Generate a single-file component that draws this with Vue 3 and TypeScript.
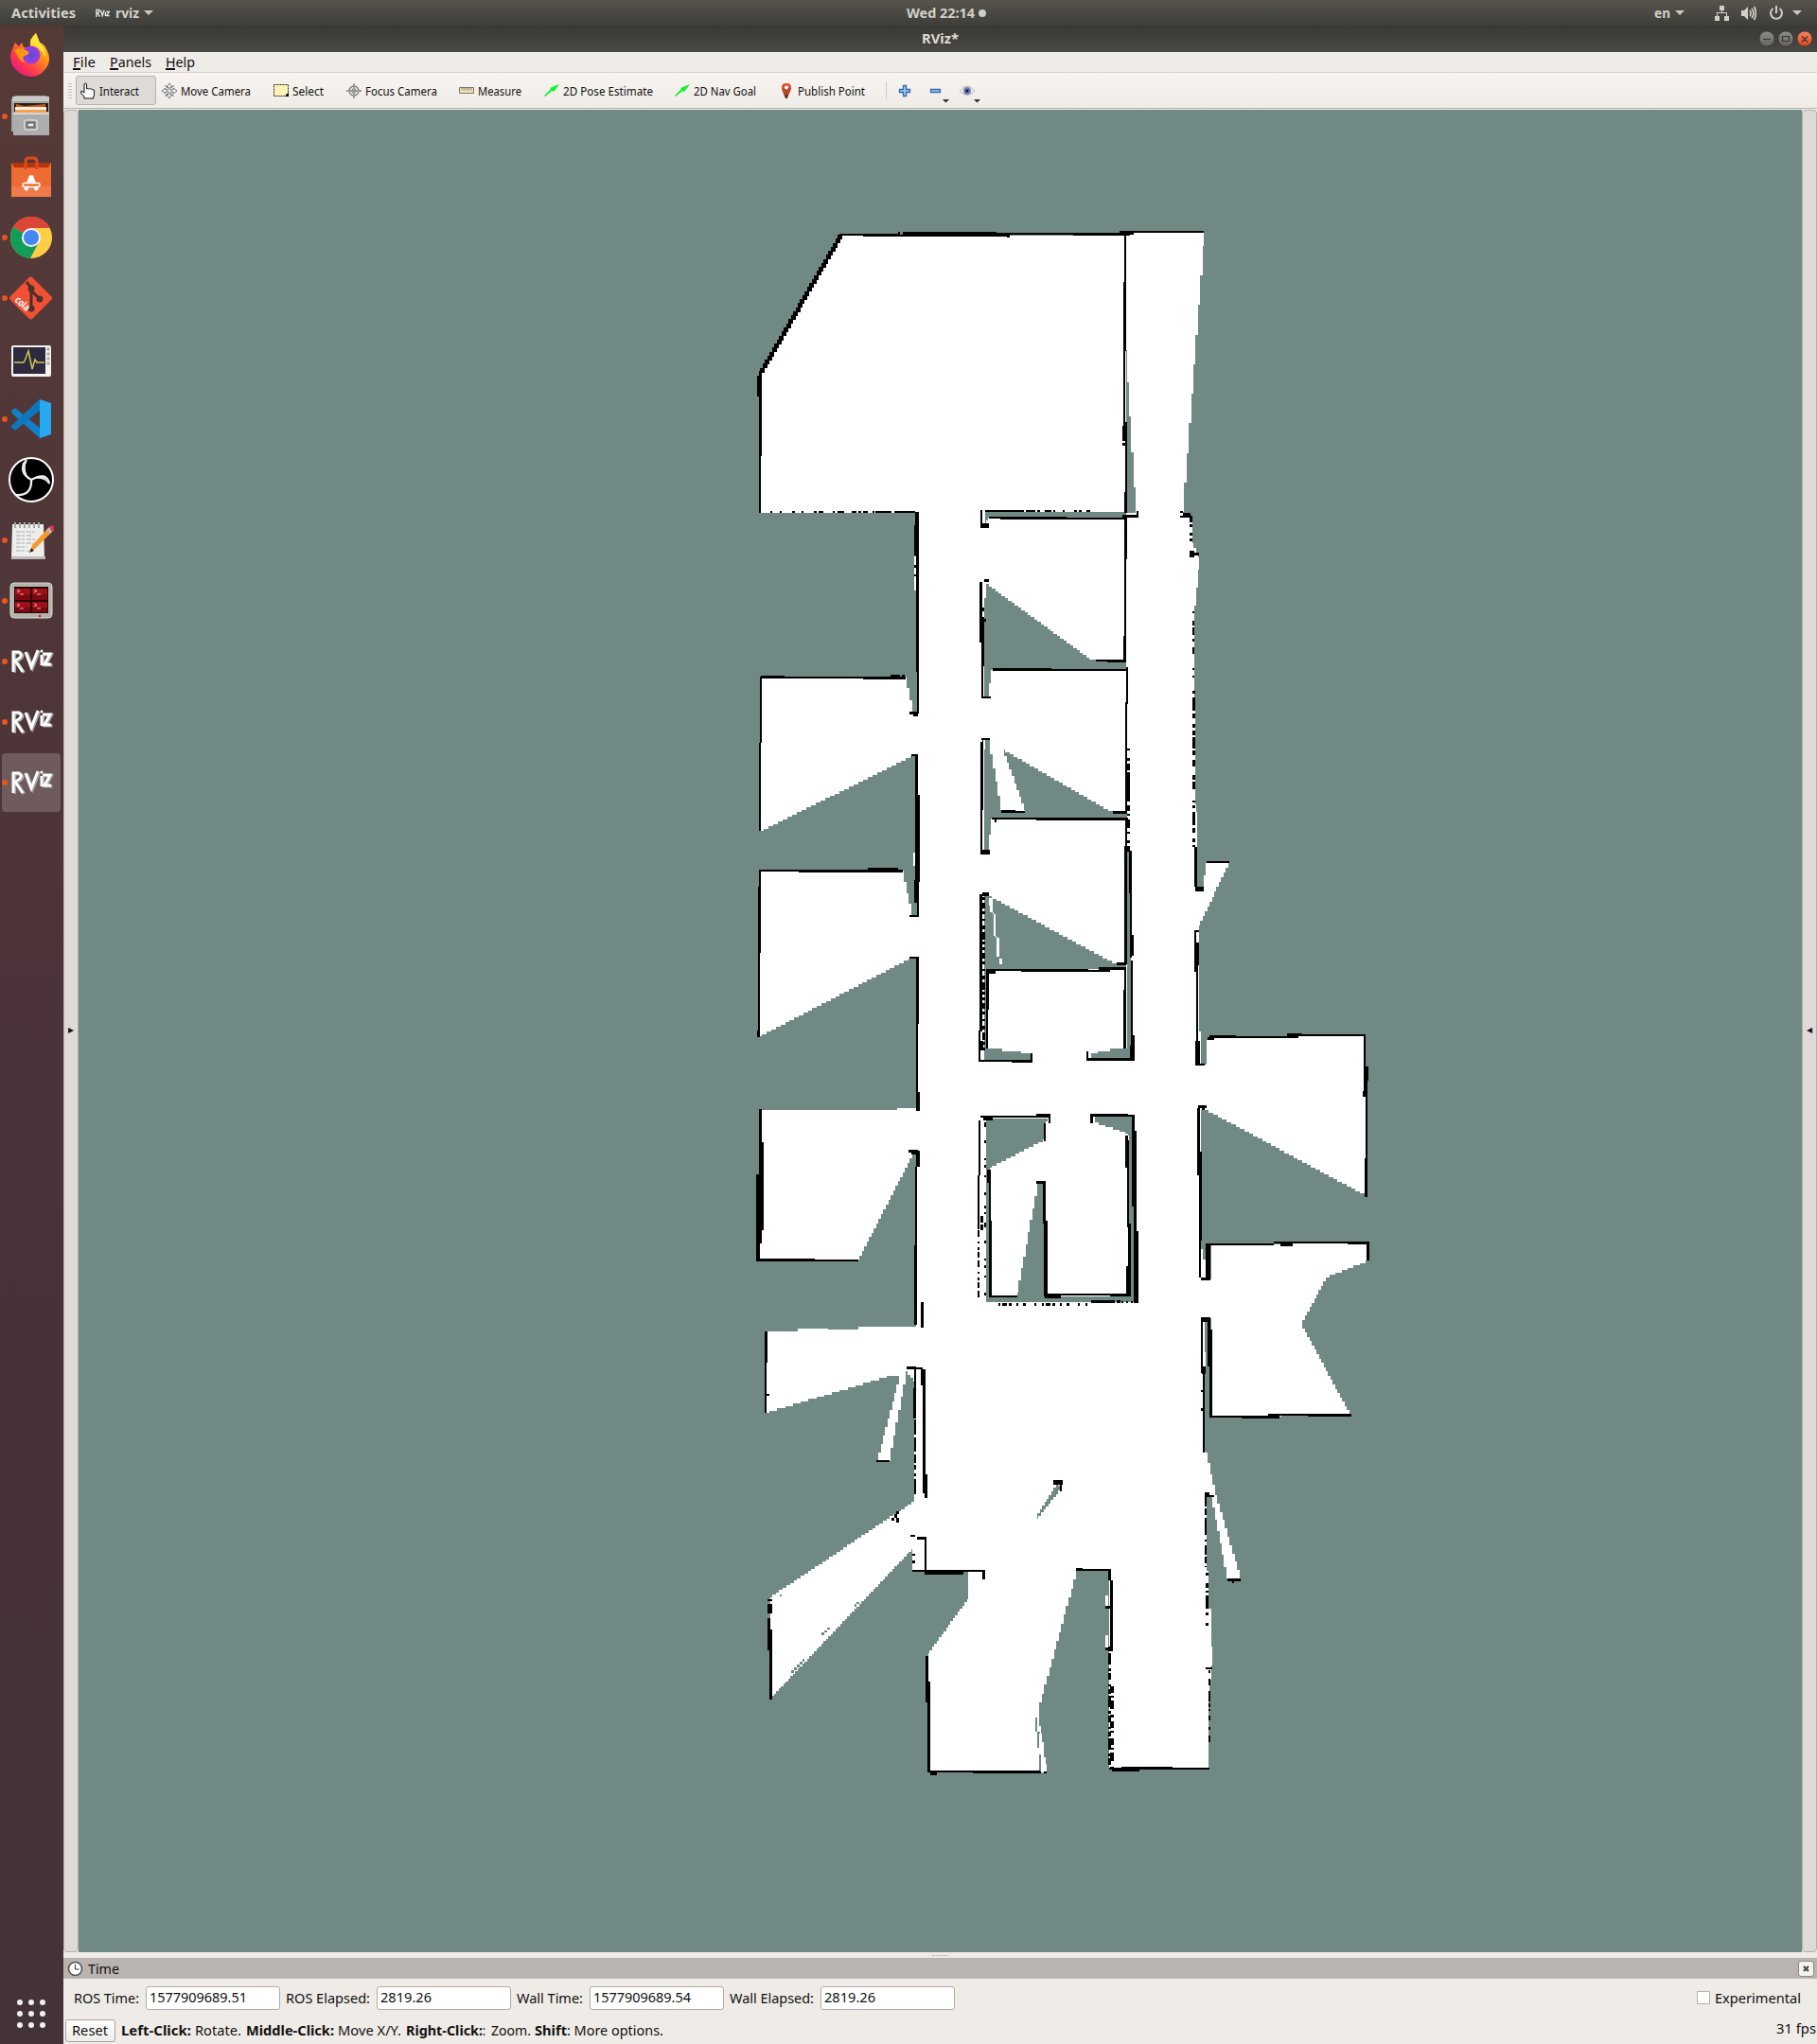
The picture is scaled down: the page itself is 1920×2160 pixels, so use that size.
<script setup lang="ts">
import { h } from 'vue'

interface LabelProps { t: string; w: number; s?: number; b?: boolean }

/* Single-line label fitted to a fixed advance width */
const Label = (p: LabelProps) =>
  h('svg', { width: p.w, height: 20, style: 'display:block;overflow:visible;flex:none' }, [
    h('text', {
      x: 0, y: 15, textLength: p.w, lengthAdjust: 'spacingAndGlyphs', fill: 'currentColor',
      'font-size': p.s ?? 14, 'font-weight': p.b ? 700 : 400, 'xml:space': 'preserve',
    }, p.t),
  ])
Label.props = ['t', 'w', 's', 'b']

type Pt = [number, number]
const CELL = 2.5

/* Polygon path whose slanted edges are broken into grid-cell steps */
function stairs(flat: number[]): string {
  const pts: Pt[] = []
  for (let i = 0; i < flat.length; i += 2) pts.push([flat[i], flat[i + 1]])
  let d = `M${pts[0][0]} ${pts[0][1]}`
  pts.forEach(([x0, y0], i) => {
    const [x1, y1] = pts[(i + 1) % pts.length]
    const n = Math.max(1, Math.round(Math.min(Math.abs(x1 - x0), Math.abs(y1 - y0)) / CELL))
    for (let k = 1; k <= n; k++) {
      const x = Math.round(x0 + ((x1 - x0) * (k - 0.5)) / n)
      const y = Math.round(y0 + ((y1 - y0) * k) / n)
      d += `H${x}V${y}`
    }
    d += `H${x1}`
  })
  return d + 'Z'
}

const free: number[][] = [
  [889, 249, 1190, 249, 1190, 246, 1272, 246, 1272, 260, 1250, 541, 1250, 545, 1259, 546, 1260, 574, 1267, 589, 1267, 602, 1263, 640, 1261, 690, 1263, 740, 1263, 850, 1265, 858, 1265, 938, 1271, 938, 1275, 912, 1299, 912, 1267, 978, 1267, 1090, 1270, 1140, 1268, 1170, 1270, 1320, 1275, 1350, 1279, 1352, 1279, 1392, 1272, 1395, 1273, 1534, 1275, 1535, 1285, 1580, 1311, 1668, 1297, 1668, 1280, 1581, 1275, 1581, 1275, 1660, 1281, 1740, 1281, 1760, 1277, 1790, 1277, 1869, 1173, 1869, 1170, 1658, 1138, 1660, 1097, 1808, 1106, 1873, 981, 1873, 981, 1747, 1023, 1690, 1023, 1660, 964, 1660, 964, 1637, 814, 1795, 814, 1688, 965, 1587, 966, 1460, 958, 1449, 940, 1544, 927, 1544, 951, 1454, 941, 1454, 809, 1493, 809, 1407, 843, 1407, 843, 1404, 907, 1405, 907, 1402, 968, 1402, 968, 1218, 965, 1219, 907, 1332, 803, 1332, 803, 1173, 948, 1173, 948, 1171, 970, 1171, 970, 1013, 962, 1013, 803, 1095, 803, 920, 954, 920, 964, 967, 970, 967, 970, 797, 965, 799, 804, 878, 804, 715, 957, 715, 965, 752, 970, 752, 970, 542, 803, 542, 803, 396],
  [1273, 1125, 1276, 1099, 1279, 1095, 1442, 1094, 1444, 1264, 1275, 1173, 1268, 1173, 1268, 1125],
  [1279, 1315, 1446, 1314, 1446, 1332, 1402, 1350, 1375, 1399, 1427, 1495, 1280, 1497],
  [1272, 1352, 1283, 1352, 1283, 1393, 1272, 1393],
]

const unknown: number[][] = [
  [1190, 370, 1192, 404, 1194, 440, 1199, 515, 1201, 542, 1190, 542],
  [1041, 541, 1190, 541, 1190, 547, 1045, 547, 1041, 553],
  [1043, 617, 1153, 697, 1190, 699, 1190, 708, 1048, 708, 1044, 736, 1040, 736, 1040, 632],
  [1040, 792, 1042, 782, 1045, 782, 1058, 856, 1058, 859, 1083, 859, 1083, 856, 1060, 792, 1173, 857, 1191, 859, 1191, 865, 1048, 865, 1044, 898, 1040, 898],
  [1040, 947, 1046, 947, 1177, 1018, 1190, 1018, 1190, 1024, 1043, 1024, 1043, 1108, 1052, 1108, 1066, 1111, 1091, 1113, 1091, 1120, 1039, 1120],
  [1191, 900, 1195, 900, 1195, 1118, 1153, 1118, 1153, 1113, 1180, 1108, 1191, 1108],
  [1042, 1182, 1108, 1182, 1104, 1187, 1104, 1204, 1046, 1234, 1046, 1371, 1075, 1371, 1075, 1366, 1097, 1251, 1103, 1251, 1103, 1370, 1192, 1370, 1193, 1200, 1187, 1196, 1157, 1186, 1157, 1180, 1198, 1180, 1198, 1376, 1041, 1376],
  [1117, 1568, 1122, 1572, 1096, 1605, 1095, 1603],
]

const slits: string[] = [
  'M1045 949h4v17h3v25h4v22h3v6h-3v-8h-3v-22h-3v-25h-4z',
  'M1271 1331h3v19h-3zM1269 1338h3v12h-3zM1271 1429h3v16h-3zM965 901h2v14h-2zM966 588h3v36h-3z',
  'M1168 1686h3v12h-3zM1168 1728h3v14h-3zM1098 1832h3v22h-3zM1101 1850h2v23h-2zM1103 1864h3v10h-3zM1036 550h4v-11h-3z',
]
const greySlits = 'M1094 1815h2v15h-2zM1096 1830h3v17h-3zM1098 1850h2v22h-2zM868 1725h3v-2h3v-3h3v2h-3v3h-3v3h-3zM833 1768h3v-3h3v-3h3v-3h3v-3h3v-3h2v3h-2v3h-3v3h-3v3h-3v3h-3zM903 1695h2v-2h3v2h-3v3h-2zM824 1685h2v2h-2z'

/* Straight walls: x, y, width, height */
const walls: number[][] = [
  [887, 247, 64, 2], [912, 248, 155, 2], [954, 245, 99, 3], [949, 245, 2, 2], [1053, 246, 131, 2], [1134, 247, 60, 2], [1064, 248, 3, 3],
  [1183, 244, 89, 2], [1183, 245, 15, 3], [1188, 247, 2, 124], [1187, 298, 2, 152], [1186, 450, 4, 16], [1186, 468, 3, 3], [1189, 446, 2, 96], [1188, 520, 2, 22],
  [802, 392, 3, 90], [800, 397, 4, 22], [802, 418, 2, 124],
  [945, 540, 22, 2], [967, 541, 4, 16], [925, 540, 17, 2], [966, 555, 3, 32], [968, 550, 3, 160], [966, 597, 3, 3], [966, 607, 3, 2], [969, 690, 2, 64], [961, 752, 9, 3], [965, 754, 5, 3],
  [1041, 539, 41, 2], [1036, 539, 2, 17], [1036, 553, 9, 5], [1045, 546, 82, 2], [1057, 547, 132, 2], [1186, 544, 16, 3], [1201, 540, 2, 7],
  [1188, 547, 3, 44], [1188, 591, 2, 107], [1187, 672, 2, 27], [1158, 697, 32, 2], [1170, 699, 20, 1],
  [1035, 615, 3, 64], [1038, 642, 2, 4], [1037, 652, 3, 52], [1037, 690, 2, 47], [1037, 736, 10, 2], [1040, 612, 5, 3], [1038, 654, 4, 3],
  [1049, 706, 62, 3], [1049, 707, 143, 2], [1190, 705, 2, 39], [1189, 742, 2, 116], [1191, 818, 3, 24], [1176, 857, 15, 3],
  [1037, 780, 9, 2], [1036, 784, 2, 115], [1038, 782, 1, 74], [1036, 898, 10, 5], [1058, 856, 15, 3], [1058, 857, 25, 2], [1048, 864, 144, 2], [1095, 865, 95, 2], [1051, 866, 2, 3],
  [1189, 864, 2, 30], [1188, 894, 3, 125], [1193, 899, 3, 45], [1194, 944, 2, 68], [1195, 988, 3, 22], [1195, 1015, 2, 105], [1180, 1017, 10, 3],
  [1035, 945, 3, 145], [1038, 943, 7, 4], [1042, 1024, 108, 2], [1044, 1026, 8, 3], [1079, 1025, 94, 2], [1161, 1022, 29, 3], [1042, 1024, 3, 43], [1042, 1067, 2, 41], [1188, 1024, 2, 84], [1187, 1046, 2, 62],
  [1034, 1089, 2, 33], [1036, 1100, 3, 10], [1034, 1120, 57, 2], [1069, 1121, 22, 2], [1089, 1113, 2, 8], [1148, 1111, 2, 10], [1148, 1118, 51, 3], [1194, 1105, 3, 16], [1196, 1094, 3, 27],
  [1036, 1179, 74, 2], [1039, 1181, 10, 3], [1095, 1177, 15, 4], [1108, 1179, 2, 8], [1103, 1187, 2, 19], [1152, 1177, 40, 3], [1152, 1177, 3, 10], [1152, 1178, 47, 2], [1196, 1178, 3, 97], [1198, 1195, 3, 182], [1201, 1301, 2, 76],
  [1189, 1200, 3, 34], [1191, 1205, 2, 92], [1192, 1293, 3, 77], [1190, 1338, 5, 30], [1095, 1248, 10, 3], [1102, 1248, 3, 45], [1103, 1290, 4, 80], [1103, 1367, 91, 2], [1104, 1368, 17, 4], [1173, 1368, 21, 2],
  [1043, 1236, 4, 14], [1045, 1236, 2, 135], [1045, 1290, 3, 81], [1045, 1369, 30, 2], [1153, 1374, 25, 3], [1180, 1374, 4, 3], [1034, 1184, 2, 58], [1033, 1242, 2, 57],
  [804, 714, 25, 2], [804, 715, 153, 2], [912, 716, 45, 2], [941, 713, 10, 2], [953, 713, 3, 2], [803, 715, 2, 70], [802, 785, 2, 70], [802, 855, 2, 23],
  [963, 797, 7, 2], [967, 797, 3, 55], [967, 840, 5, 92], [966, 930, 4, 24], [969, 930, 2, 39], [961, 967, 10, 2],
  [802, 919, 152, 2], [844, 920, 110, 2], [917, 917, 32, 3], [802, 919, 2, 20], [801, 937, 3, 70], [801, 1007, 2, 88], [800, 1089, 3, 7],
  [961, 1011, 10, 2], [968, 1011, 3, 71], [968, 1082, 2, 92], [968, 1154, 4, 20],
  [802, 1172, 3, 35], [802, 1207, 5, 93], [799, 1241, 4, 92], [801, 1300, 4, 14], [799, 1331, 108, 2], [799, 1330, 62, 2], [960, 1215, 10, 3], [963, 1216, 9, 4], [968, 1218, 4, 15], [967, 1233, 2, 167], [966, 1316, 3, 84], [973, 1376, 3, 27],
  [808, 1407, 3, 33], [808, 1440, 2, 53], [809, 1473, 4, 2], [958, 1444, 10, 3], [966, 1445, 9, 2], [966, 1447, 2, 20], [965, 1467, 3, 32], [973, 1447, 5, 17], [975, 1447, 3, 131], [977, 1558, 3, 25], [926, 1543, 14, 2],
  [947, 1597, 3, 3], [945, 1600, 3, 4], [942, 1604, 3, 3], [947, 1604, 3, 5], [962, 1622, 5, 2], [969, 1624, 10, 3], [977, 1624, 2, 37], [964, 1659, 77, 2], [977, 1660, 41, 4], [1038, 1660, 3, 9],
  [811, 1690, 5, 2], [811, 1695, 5, 10], [811, 1710, 3, 34], [813, 1722, 3, 72], [813, 1793, 3, 3],
  [978, 1750, 3, 49], [980, 1777, 3, 95], [980, 1871, 119, 2], [1028, 1872, 72, 2], [983, 1872, 7, 4], [1103, 1872, 3, 2],
  [1137, 1657, 7, 3], [1137, 1658, 37, 2], [1171, 1658, 3, 12], [1173, 1670, 3, 75], [1168, 1697, 5, 3], [1168, 1741, 3, 3], [1172, 1868, 106, 2], [1175, 1869, 29, 3], [1185, 1867, 54, 2],
  [1113, 1564, 10, 5], [1120, 1564, 2, 12],
  [1247, 540, 3, 2], [1250, 542, 8, 3], [1247, 545, 13, 2], [1257, 545, 3, 5], [1257, 582, 5, 7], [1262, 584, 5, 3], [1262, 895, 3, 42], [1263, 937, 9, 5], [1275, 910, 24, 2],
  [1262, 983, 5, 2], [1262, 985, 2, 42], [1263, 996, 4, 24], [1264, 1020, 2, 80], [1263, 1100, 5, 24], [1263, 1124, 10, 2],
  [1276, 1096, 7, 3], [1278, 1094, 28, 2], [1279, 1095, 93, 2], [1360, 1092, 16, 3], [1375, 1093, 68, 2], [1441, 1093, 2, 61], [1443, 1127, 3, 15], [1440, 1153, 4, 6], [1443, 1142, 2, 122], [1442, 1224, 3, 41],
  [1266, 1168, 9, 3], [1270, 1170, 3, 3], [1265, 1171, 3, 71], [1267, 1217, 3, 94], [1267, 1310, 2, 40], [1269, 1350, 10, 3], [1274, 1314, 5, 37], [1274, 1314, 72, 2], [1346, 1312, 100, 2], [1353, 1314, 13, 3], [1424, 1313, 23, 2], [1444, 1312, 3, 20],
  [1269, 1392, 10, 5], [1269, 1392, 2, 59], [1276, 1392, 3, 52], [1278, 1405, 3, 91], [1278, 1496, 74, 2], [1312, 1497, 40, 2], [1340, 1494, 88, 2], [1382, 1495, 46, 2], [1270, 1444, 4, 8], [1271, 1451, 2, 84], [1269, 1469, 2, 2], [1269, 1488, 2, 3],
  [1273, 1577, 5, 5], [1278, 1580, 5, 2], [1297, 1668, 14, 3], [1302, 1671, 2, 2], [1274, 1762, 7, 2],
]

/* Broken walls: x1, y1, x2, y2, thickness, dash pattern */
interface Dash { p: [number, number, number, number]; w: number; d: string }
const broken: Dash[] = [
  { p: [814, 541, 925, 541], w: 2, d: '2 8 2 11 3 7 2 11 3 2 5 10 2 3 7 8 5 2 3 2 5 5 2 3' },
  { p: [1084, 540, 1166, 540], w: 2, d: '10 2 3 5 7 2 2 8 2 10 3 2 3 5 4 14 2 0' },
  { p: [1258.5, 549, 1258.5, 574], w: 3, d: '3 2 3 6 3 3 3 4' },
  { p: [1260.5, 646, 1260.5, 716], w: 2, d: '2 8 5 2 8 4 3 6 7 15 2 6' },
  { p: [1261.5, 730, 1261.5, 895], w: 3, d: '3 4 14 3 5 6 4 3 5 2 12 2 5 5 7 9 5 2 8 12 2 3' },
  { p: [1192.5, 791, 1192.5, 862], w: 3, d: '2 8 3 3 7 2 3 3 25 4 6 3' },
  { p: [1192.5, 866, 1192.5, 900], w: 3, d: '9 4 2 7 3 3' },
  { p: [1039, 948, 1039, 1110], w: 3, d: '3 3 6 3 3 5 2 5 4 3 8 2 3 3' },
  { p: [1040.5, 1186, 1040.5, 1370], w: 2, d: '5 14 3 16 2 5 3 8 2 16 3 11 3 4 2 9' },
  { p: [1034, 1300, 1034, 1376], w: 2, d: '7 5 2 4 3 2 6 3' },
  { p: [1037, 1285, 1037, 1300], w: 3, d: '7 2' },
  { p: [1055, 1378, 1150, 1378], w: 3, d: '2 2 5 2 3 5 2 5 3 9 2 6' },
  { p: [1185, 1375.5, 1200, 1375.5], w: 2, d: '2 3' },
  { p: [966.5, 1500, 966.5, 1580], w: 2, d: '16 3 15 3 9 2 5 4 3 3' },
  { p: [965.5, 1642, 965.5, 1656], w: 3, d: '2 5 3 9' },
  { p: [1172, 1740, 1172, 1868], w: 3, d: '5 2 12 4 3 2 7 5 2 3' },
  { p: [1175, 1782, 1175, 1868], w: 4, d: '7 3 2 3 9 6 3 4 7 3 2 6' },
  { p: [1274, 1582, 1274, 1656], w: 2, d: '10 2 7 3 18 5 2 4' },
  { p: [1275.5, 1662, 1275.5, 1718], w: 3, d: '3 8 5 3 2 3 14 4' },
  { p: [1277.5, 1765, 1277.5, 1845], w: 2, d: '3 6 7 6 11 2 4 2 2 5 5 7' },
]

/* Slanted outer wall of the top hall, drawn as a run of offset cells */
const slant = Array.from({ length: 34 }, (_, i) => [Math.round(885 - i * 2.47), Math.round(248 + i * 4.26), 5, 5])

const tools = [
  { icon: 'hand', t: 'Interact', w: 42, box: 86 },
  { icon: 'move', t: 'Move Camera', w: 74, box: 118 },
  { icon: 'select', t: 'Select', w: 33, box: 77 },
  { icon: 'focus', t: 'Focus Camera', w: 76, box: 119 },
  { icon: 'ruler', t: 'Measure', w: 46, box: 90 },
  { icon: 'arrow', t: '2D Pose Estimate', w: 95, box: 138 },
  { icon: 'arrow', t: '2D Nav Goal', w: 66, box: 110 },
  { icon: 'pin', t: 'Publish Point', w: 71, box: 118 },
]
const apps = [
  ['firefox', 0], ['files', 1], ['software', 0], ['chrome', 1], ['cola', 1], ['monitor', 0], ['code', 1],
  ['obs', 0], ['notes', 1], ['term', 1], ['rviz', 1], ['rviz', 1], ['rviz', 1],
].map(([name, run]) => ({ name, run }))

const fields = [
  { t: 'ROS Time:', w: 69, v: '1577909689.51', vw: 103 },
  { t: 'ROS Elapsed:', w: 89, v: '2819.26', vw: 54 },
  { t: 'Wall Time:', w: 70, v: '1577909689.54', vw: 103 },
  { t: 'Wall Elapsed:', w: 89, v: '2819.26', vw: 54 },
]
const hints = [
  { t: 'Left-Click:', w: 74, b: true, g: 4 }, { t: 'Rotate.', w: 49, b: false, g: 5 },
  { t: 'Middle-Click:', w: 93, b: true, g: 4 }, { t: 'Move X/Y.', w: 67, b: false, g: 5 },
  { t: 'Right-Click:', w: 81, b: true, g: 0 }, { t: ':', w: 3, b: false, g: 6 },
  { t: 'Zoom.', w: 42, b: false, g: 4 }, { t: 'Shift', w: 34, b: true, g: 0 },
  { t: ': More options.', w: 102, b: false, g: 0 },
]
</script>

<template>
  <div class="desktop">
    <header class="topbar">
      <div class="tl">
        <Label t="Activities" :w="68" :s="14" :b="true" />
        <svg class="mini" width="15" height="10" viewBox="0 0 46 28"><g fill="none" stroke="#eee" stroke-width="4"><path d="M3 26V3h8q5 5-5 11l8 11M17 4l5 18 6-18M32 10v13M35 9h9l-8 13h9" /></g></svg>
        <Label t="rviz" :w="25" :s="14" :b="true" />
        <i class="caret" />
      </div>
      <div class="tc"><Label t="Wed 22:14" :w="72" :s="14" :b="true" /><i class="bullet" /></div>
      <div class="tr">
        <Label t="en" :w="17" :s="14" :b="true" />
        <i class="caret" />
        <svg class="net" width="16" height="16" viewBox="0 0 16 16"><path d="M5 0h5v5H8v2h5v4h2v5h-5v-5h2V8H3v3h2v5H0v-5h2V7h5V5H5z" fill="#d2cfc8" /></svg>
        <svg class="vol" width="16" height="16" viewBox="0 0 16 16"><path d="M0 5h3l4-4v14l-4-4H0z" fill="#d2cfc8" /><path d="M9 5q2 3 0 6M11 3q4 5 0 10M13.500 1q4 7 0 14" fill="none" stroke="#d2cfc8" stroke-width="1.700" /></svg>
        <svg class="pow" width="16" height="16" viewBox="0 0 16 16"><path d="M4.500 3a6 6 0 1 0 7 0M8 0v8" fill="none" stroke="#d2cfc8" stroke-width="2" /></svg>
        <i class="caret" />
      </div>
    </header>

    <div class="body">
      <nav class="dock">
        <div v-for="(a, i) in apps" :key="i" class="slot" :class="{ on: i === 12 }">
          <i v-if="a.run" class="dot" />
          <svg width="48" height="48" viewBox="0 0 48 48">
            <g v-if="a.name === 'firefox'">
              <defs>
                <linearGradient id="fx" x1="1" y1="0" x2=".2" y2="1"><stop offset="0" stop-color="#fff44f" /><stop offset=".4" stop-color="#ff980e" /><stop offset=".75" stop-color="#ff3750" /><stop offset="1" stop-color="#e3158a" /></linearGradient>
                <radialGradient id="fg"><stop offset="0" stop-color="#5a4ed8" /><stop offset="1" stop-color="#a338e0" /></radialGradient>
              </defs>
              <path d="M4 17l3-7 4 4 3-4 2 5 7 1V7l6-7 4 10q5 1 8 9 5 10-2 19-6 8-15 8T7 38Q-1 29 4 17z" fill="url(#fx)" />
              <circle cx="24" cy="23" r="9.500" fill="url(#fg)" />
              <path d="M6 18q6-3 10-1l6 3q-2 4-6 4-2 4 2 7-7-1-9-8z" fill="#ff980e" />
              <path d="M29 0l4 10q7 8 6 16-6-13-16-13 0-8 6-13z" fill="#ffe23a" />
            </g>
            <g v-else-if="a.name === 'files'">
              <path d="M6 4q0-2 2-2h32l3 3v35H3V6z" fill="#a4a4a3" /><path d="M4 3h39v5H4z" fill="#c9c9c8" /><path d="M6 10h36v9H6z" fill="#211d1b" /><path d="M8 11l9 2 22-2v9H8z" fill="#cf571c" /><path d="M7 14h33v3H7z" fill="#fff1de" /><path d="M7 17h33v3H7z" fill="#f3a151" /><path d="M5 20h38v24H5z" fill="#acadad" /><path d="M5 20h38v2H5z" fill="#d6d6d6" /><rect x="17" y="28" width="13" height="10" rx="2" fill="#858686" stroke="#ddd" stroke-width="1.500" /><path d="M20 31h7v4h-7z" fill="#eee" stroke="#555" />
            </g>
            <g v-else-if="a.name === 'software'">
              <path d="M3 9h42v6H3z" fill="#b6350c" /><path d="M3 9l3 5h36l3-5v36H3z" fill="#ee6b33" /><path d="M3 34h42v11H3z" fill="#f07a49" /><path d="M18 16V8q0-4 3-4h6q3 0 3 4v8" fill="none" stroke="#d84c20" stroke-width="3" /><path d="M18 38l6-15 6 15" fill="none" stroke="#fff" stroke-width="4" stroke-linejoin="bevel" /><rect x="15" y="30.500" width="18" height="4" rx="2" fill="#ee6b33" stroke="#fff" stroke-width="1.500" />
            </g>
            <g v-else-if="a.name === 'chrome'">
              <circle cx="24" cy="24" r="22" fill="#ffce44" /><path d="M24 24L5 13a22 22 0 0 1 39 1H24z" fill="#dc4639" /><path d="M24 24L5 13a22 22 0 0 0 18 33l9-17z" fill="#129c59" /><circle cx="24" cy="24" r="10" fill="#f4f4f4" /><circle cx="24" cy="24" r="8" fill="#4587f4" />
            </g>
            <g v-else-if="a.name === 'cola'">
              <path d="M21.500 2.500q2-2 4 0l20 20q1 1 0 3l-20 20q-2 2-4 0l-20-20q-1-1 0-3z" fill="#f05133" /><path d="M19 7l5 6v22M24 16l9 9" stroke="#4b312e" stroke-width="3" fill="none" /><circle cx="24" cy="14" r="3.500" fill="#4b312e" /><circle cx="33" cy="25" r="3.500" fill="#4b312e" /><circle cx="24" cy="35" r="3.500" fill="#4b312e" /><text x="6" y="27" font-size="11" font-weight="700" fill="#fff" transform="rotate(42 6 27)" textLength="17" lengthAdjust="spacingAndGlyphs">cola</text>
            </g>
            <g v-else-if="a.name === 'monitor'">
              <g transform="translate(0 5)"><rect x="3" y="5" width="42" height="33" rx="2" fill="#f4f2ee" /><rect x="5" y="7" width="34" height="28" fill="#2e2a3d" /><path d="M6 23h10l2-4 3-8 4 19 3-10 2 3h8" fill="none" stroke="#cfc653" stroke-width="1.500" /><g fill="#aaa"><circle cx="42" cy="9" r="1.700" /><circle cx="42" cy="14" r="1.700" /><circle cx="42" cy="19" r="1.700" /><circle cx="42" cy="24" r="1.700" /></g></g>
            </g>
            <g v-else-if="a.name === 'code'">
              <path d="M3 15l4-3 27 22v11L4 18z" fill="#1180c8" /><path d="M3 31l31-29v12L7 36l-4-3z" fill="#0e76bd" /><path d="M33 3l12 4v33l-12 4z" fill="#27a9f0" />
            </g>
            <g v-else-if="a.name === 'obs'">
              <circle cx="24" cy="24" r="23" fill="#000" stroke="#fff" stroke-width="2" /><path d="M19 3q-9 13 5 21 16-9 19 4M24 24q1 17-16 16" fill="none" stroke="#f3f3f3" stroke-width="2.300" /><path d="M15 6q-4 14 9 18-9-7-5-20zM44 30Q36 14 24 24q13-4 20 6zM8 40q18 2 16-16 0 15-16 16z" fill="#eee" />
            </g>
            <g v-else-if="a.name === 'notes'">
              <path d="M4 7h33l1 36H3z" fill="#eeeeec" /><path d="M3 41h36v3H3z" fill="#bbb" /><path d="M7 5v6M12 5v6M17 5v6M22 5v6M27 5v6M32 5v6" stroke="#aaa" stroke-width="2" /><path d="M8 15h22M8 19h16M8 23h20M8 27h18M8 31h12M8 35h14" stroke="#aaa" stroke-dasharray="5 1 3 2" /><path d="M23 36l2-7L41 12l4 4-17 17z" fill="#f49b30" /><path d="M40 13l4-4 4 4-4 4z" fill="#bbb" /><path d="M43 10q3-4 6 1l-3 4z" fill="#df3542" /><path d="M22 37l2-5 3 3z" fill="#222" />
            </g>
            <g v-else-if="a.name === 'term'">
              <rect x="2" y="5" width="44" height="37" rx="4" fill="#b2b4ac" stroke="#d7d8d3" /><rect x="6" y="9" width="36" height="28" fill="#270707" /><path d="M7 11h16v12H7zM25 11h16v12H25zM7 25h16v11H7zM25 25h16v11H25z" fill="#a30f18" /><path d="M7 17h16v6H7zM25 17h16v6H25zM7 31h16v5H7zM25 31h16v5H25z" fill="#7a0a12" /><path d="M9 12l3 1.500-3 1.500M12 17h4M27 12l3 1.500-3 1.500M30 17h4M9 27l3 1.500-3 1.500M12 32h4M27 27l3 1.500-3 1.500M30 32h4" fill="none" stroke="#ffb5b5" stroke-width=".9" /><circle cx="33" cy="40" r="1.300" fill="#e11" />
            </g>
            <g v-else>
              <g fill="none" stroke="#a8a5a4" stroke-width="3.200" transform="translate(1.500 .8)"><path d="M5 35V14h6q6 4-4 9l8 12M18 14l6 16 7-18M35 17v11M36 16h8l-6 11h7" /></g>
              <g fill="none" stroke="#fff" stroke-width="3"><path d="M5 35V14h6q6 4-4 9l8 12M18 14l6 16 7-18M35 17v11M36 16h8l-6 11h7" /></g><circle cx="35" cy="13" r="1.500" fill="#fff" />
            </g>
          </svg>
        </div>
        <svg class="grid" width="32" height="32" viewBox="0 0 32 32"><g fill="#f2f0f0"><template v-for="r in 3" :key="r"><circle v-for="c in 3" :key="c" :cx="c * 12 - 8" :cy="r * 12 - 8" r="3" /></template></g></svg>
      </nav>

      <main class="win">
        <div class="title">
          <div class="tt"><Label t="RViz*" :w="39" :s="14" :b="true" /></div>
          <svg class="wb" width="60" height="18" viewBox="0 0 60 18">
            <defs>
              <linearGradient id="gb" x2="0" y2="1"><stop offset="0" stop-color="#8e8c85" /><stop offset="1" stop-color="#65635e" /></linearGradient>
              <linearGradient id="rb" x2="0" y2="1"><stop offset="0" stop-color="#f58566" /><stop offset="1" stop-color="#dc4617" /></linearGradient>
            </defs>
            <circle cx="10" cy="9" r="8" fill="url(#gb)" stroke="#34332f" stroke-width=".7" /><circle cx="30" cy="9" r="8" fill="url(#gb)" stroke="#34332f" stroke-width=".7" /><circle cx="50" cy="9" r="8" fill="url(#rb)" stroke="#34332f" stroke-width=".7" />
            <path d="M6 9.500h8M26.500 6.500h7v5h-7zM47 6.500l6 6m0-6l-6 6" fill="none" stroke="#3b3630" stroke-width="1.200" />
          </svg>
        </div>
        <div class="menu">
          <span class="m" style="width: 39px"><Label t="File" :w="24" :s="15" /><u style="width: 8px" /></span>
          <span class="m" style="width: 59px"><Label t="Panels" :w="44" :s="15" /><u style="width: 9px" /></span>
          <span class="m"><Label t="Help" :w="31" :s="15" /><u style="width: 10px" /></span>
        </div>
        <div class="tools">
          <i class="grip" />
          <div v-for="(t, i) in tools" :key="i" class="tool" :style="{ width: t.box + 'px' }">
            <div class="tb" :class="{ sel: i === 0 }">
              <svg width="16" height="18" viewBox="0 0 16 18">
                <path v-if="t.icon === 'hand'" d="M4 11V3q0-2 1.300-2T6.600 3v4q1.200-1 2 0 1.200-1 2 0 1.200-1 2 1 2-1 2 1v4l-1 3v1H4v-2L1 12q-1-2 0-3l3 2" fill="#fff" stroke="#111" />
                <g v-else-if="t.icon === 'move'" fill="#f4f4f2" stroke="#666" stroke-width=".9"><path d="M8 1l3 4H9v3h3V6l4 3-4 3v-2H9v3h2l-3 4-3-4h2v-3H4v2L0 9l4-3v2h3V5H5zM3 3l3 3M13 3l-3 3M3 15l3-3M13 15l-3-3" /></g>
                <g v-else-if="t.icon === 'select'"><path d="M.5 2.500h15v12H.500z" fill="#fff4b4" stroke="#222" stroke-dasharray="2 1" /><path d="M16 11v4h-3v-2z" /></g>
                <g v-else-if="t.icon === 'focus'" fill="none" stroke="#777"><circle cx="8" cy="9" r="5" stroke-width="1.300" /><circle cx="8" cy="9" r="2.300" /><path d="M8 1v16M0 9h16" stroke="#999" stroke-width="1.800" /></g>
                <g v-else-if="t.icon === 'ruler'"><path d="M.5 5.500h15v6H.500z" fill="#efe3b2" stroke="#777" /><path d="M3 6v2M5 6v3M7 6v2M9 6v3M11 6v2M13 6v3" stroke="#777" stroke-width=".8" /></g>
                <path v-else-if="t.icon === 'arrow'" d="M0 14l7-7-1-1L16 2l-6 8-2-1-7 6z" fill="#0df32c" />
                <g v-else><path d="M8 1q5 0 5 5 0 2-4 10v1H7Q3 8 3 6q0-5 5-5z" fill="#b64427" /><path d="M6 13h4l-1 4H7z" fill="#4f3b22" /><path d="M3 6q0-5 5-5t5 5" fill="#e15432" /><circle cx="8" cy="5.500" r="2" fill="#fff" /></g>
              </svg>
              <Label :t="t.t" :w="t.w" :s="12.5" />
            </div>
          </div>
          <i class="sep" />
          <svg width="110" height="36" viewBox="-1 0 110 36">
            <path d="M16.500 12.500h3v4h4v3h-4v4h-3v-4h-4v-3h4z" fill="#a9c9ee" stroke="#3067ae" stroke-width="1.300" />
            <path d="M45.500 16.500h10v3h-10z" fill="#a9c9ee" stroke="#3067ae" stroke-width="1.300" />
            <path d="M76 18q8-10 16 0-8 9-16 0z" fill="#eee" stroke="#bbb" /><circle cx="84" cy="18" r="4" fill="#7583bb" /><circle cx="84" cy="18" r="1.700" fill="#151b46" />
            <path d="M58 27h7l-3.500 3.500zM91 27h7l-3.500 3.500z" fill="#333" />
          </svg>
        </div>

        <div class="stage">
          <div class="side l"><b>▸</b></div>
          <svg class="map" viewBox="83 116 1821 1947" width="1821" height="1947" shape-rendering="crispEdges">
            <path v-for="(p, i) in free" :key="'f' + i" :d="stairs(p)" fill="#fff" />
            <path v-for="(p, i) in unknown" :key="'u' + i" :d="stairs(p)" fill="#708984" />
            <path :d="greySlits" fill="#708984" />
            <path v-for="(p, i) in slits" :key="'s' + i" :d="p" fill="#fff" />
            <rect v-for="(r, i) in walls" :key="'w' + i" :x="r[0]" :y="r[1]" :width="r[2]" :height="r[3]" />
            <rect v-for="(r, i) in slant" :key="'d' + i" :x="r[0]" :y="r[1]" :width="r[2]" :height="r[3]" />
            <line v-for="(b, i) in broken" :key="'b' + i" :x1="b.p[0]" :y1="b.p[1]" :x2="b.p[2]" :y2="b.p[3]" stroke="#000" :stroke-width="b.w" :stroke-dasharray="b.d" />
          </svg>
          <div class="side r"><b>◂</b></div>
        </div>

        <div class="split"><i /></div>
        <div class="panel">
          <svg width="17" height="17" viewBox="0 0 17 17"><circle cx="8.500" cy="8.500" r="7" fill="#fff" stroke="#55534f" stroke-width="1.600" /><path d="M8.500 4v5h4" fill="none" stroke="#333" /></svg>
          <Label t="Time" :w="33" :s="15" />
          <span class="x"><svg width="7" height="7" viewBox="0 0 7 7"><path d="M1 1l5 5m0-5L1 6" stroke="#444" stroke-width="2" /></svg></span>
        </div>
        <div class="row">
          <template v-for="(f, i) in fields" :key="i">
            <Label :t="f.t" :w="f.w" :s="14.5" />
            <span class="inp"><Label :t="f.v" :w="f.vw" :s="14.5" /></span>
          </template>
          <span class="cb" />
          <Label t="Experimental" :w="91" :s="14.5" />
        </div>
        <footer class="foot">
          <span class="reset"><Label t="Reset" :w="38" :s="14.5" /></span>
          <span v-for="(x, i) in hints" :key="i" :style="{ marginRight: x.g + 'px' }"><Label :t="x.t" :w="x.w" :b="x.b" :s="14.5" /></span>
          <span class="fps"><Label t="31 fps" :w="42" :s="14.5" /></span>
        </footer>
      </main>
    </div>
  </div>
</template>

<style>
body { margin: 0; background: #efebe7; }
</style>

<style scoped>
.desktop { width: 1920px; height: 2160px; display: flex; flex-direction: column; overflow: hidden; font-family: "Noto Sans", "Open Sans", sans-serif; color: #111; }
.topbar { height: 27px; flex: none; display: grid; grid-template-columns: 958px 1fr 172px; align-items: center; background: linear-gradient(#57544c, #3e3d38); color: #d3d0c8; }
.tl, .tc, .tr { display: flex; align-items: center; height: 27px; }
.tl { padding-left: 12px; }
.mini { margin: 0 6px 0 21px; }
.caret { width: 0; border: 5px solid transparent; border-top-color: #cbc8c0; border-bottom: 0; margin-left: 5px; }
.bullet { width: 8px; height: 8px; border-radius: 50%; background: #ccc; margin-left: 4px; }
.net { margin-left: 32px; }
.vol { margin-left: 12px; }
.pow { margin-left: 13px; }
.tr .caret:last-child { margin-left: 9px; }
.body { flex: 1; display: flex; min-height: 0; }
.dock { width: 67px; flex: none; display: flex; flex-direction: column; background: linear-gradient(#553a37, #49323a 60%, #44323a); }
.slot { height: 64px; width: 66px; display: flex; align-items: center; justify-content: center; position: relative; flex: none; }
.slot.on::before { content: ''; position: absolute; left: 2px; top: 1px; width: 62px; height: 62px; border-radius: 4px; background: #6f5a5d; }
.slot svg { position: relative; }
.dot { position: absolute; left: 2px; top: 29px; width: 6px; height: 6px; border-radius: 50%; background: #e95420; z-index: 1; }
.grid { margin: auto 0 16px 17px; }
.win { width: 1853px; display: flex; flex-direction: column; background: #efebe7; }
.title { height: 28px; flex: none; display: flex; align-items: center; background: linear-gradient(#393834, #4b4944); color: #dfdbd2; }
.tt { margin-left: 907px; }
.wb { margin-left: auto; margin-right: 3px; }
.menu { height: 21px; flex: none; display: flex; padding-left: 10px; border-bottom: 1px solid #d5d0cb; }
.m { position: relative; }
.m svg { transform: translateY(1px); }
.m u { position: absolute; left: 0; top: 17px; height: 2px; background: #111; }
.tools { height: 37px; flex: none; display: flex; align-items: center; background: linear-gradient(#f8f5f0, #efebe7); border-bottom: 1px solid #b8b3ad; margin-bottom: 1px; }
.grip { width: 4px; height: 17px; margin: 0 4px 0 5px; background: radial-gradient(#c4bfba 0.7px, transparent 0.8px) 0 0 / 2px 3px; }
.tool { flex: none; }
.tb { height: 29px; display: flex; align-items: center; padding-left: 4px; border: 1px solid transparent; }
.tb svg + svg { margin-left: 4px; }
.tb.sel { width: 79px; background: #dddad7; border-color: #b5b0ab; border-radius: 3px; }
.sep { width: 1px; height: 19px; background: #cfcac5; }
.stage { display: flex; height: 1947px; flex: none; }
.side { width: 13px; border: 1px solid #b4afaa; background: #dedad7; border-radius: 4px; display: flex; align-items: center; justify-content: center; font: 14px "DejaVu Sans", sans-serif; }
.side b { font-weight: 400; font-size: 12px; margin-bottom: 3px; }
.side.l { width: 14px; }
.side.r { width: 14px; }
.map { display: block; flex: none; background: #708984; }
.split { height: 6px; display: flex; justify-content: center; align-items: center; flex: none; }
.split i { width: 17px; height: 0; border-top: 1px dotted #aaa; }
.panel { height: 22px; flex: none; display: flex; align-items: center; background: #b9b4b0; padding: 0 3px 0 4px; }
.panel svg + svg { margin-left: 5px; transform: translateY(1px); }
.x { margin-left: auto; width: 15px; height: 15px; border: 1px solid #8d8883; border-radius: 3px; background: #f4f2ef; display: flex; align-items: center; justify-content: center; }
.row { height: 40px; flex: none; display: flex; align-items: center; padding: 0 17px 0 11px; box-sizing: border-box; }
.row > svg { transform: translateY(1px); }
.inp { width: 137px; height: 23px; border: 1px solid #b0aba6; border-radius: 3px; background: #fff; margin: 0 6px 0 7px; padding-left: 3px; display: flex; align-items: center; }
.cb { width: 12px; height: 12px; border: 1px solid #b8b3ae; background: #fff; margin: 0 5px 0 auto; }
.foot { height: 29px; display: flex; align-items: center; padding-left: 2px; flex: none; }
.reset { width: 45px; height: 22px; border: 1px solid #aaa5a0; border-radius: 3px; background: linear-gradient(#fff, #eeebe8); padding-left: 6px; margin-right: 6px; display: flex; align-items: center; }
.fps { margin-left: auto; margin-right: 1px; margin-top: -4px; }
</style>
